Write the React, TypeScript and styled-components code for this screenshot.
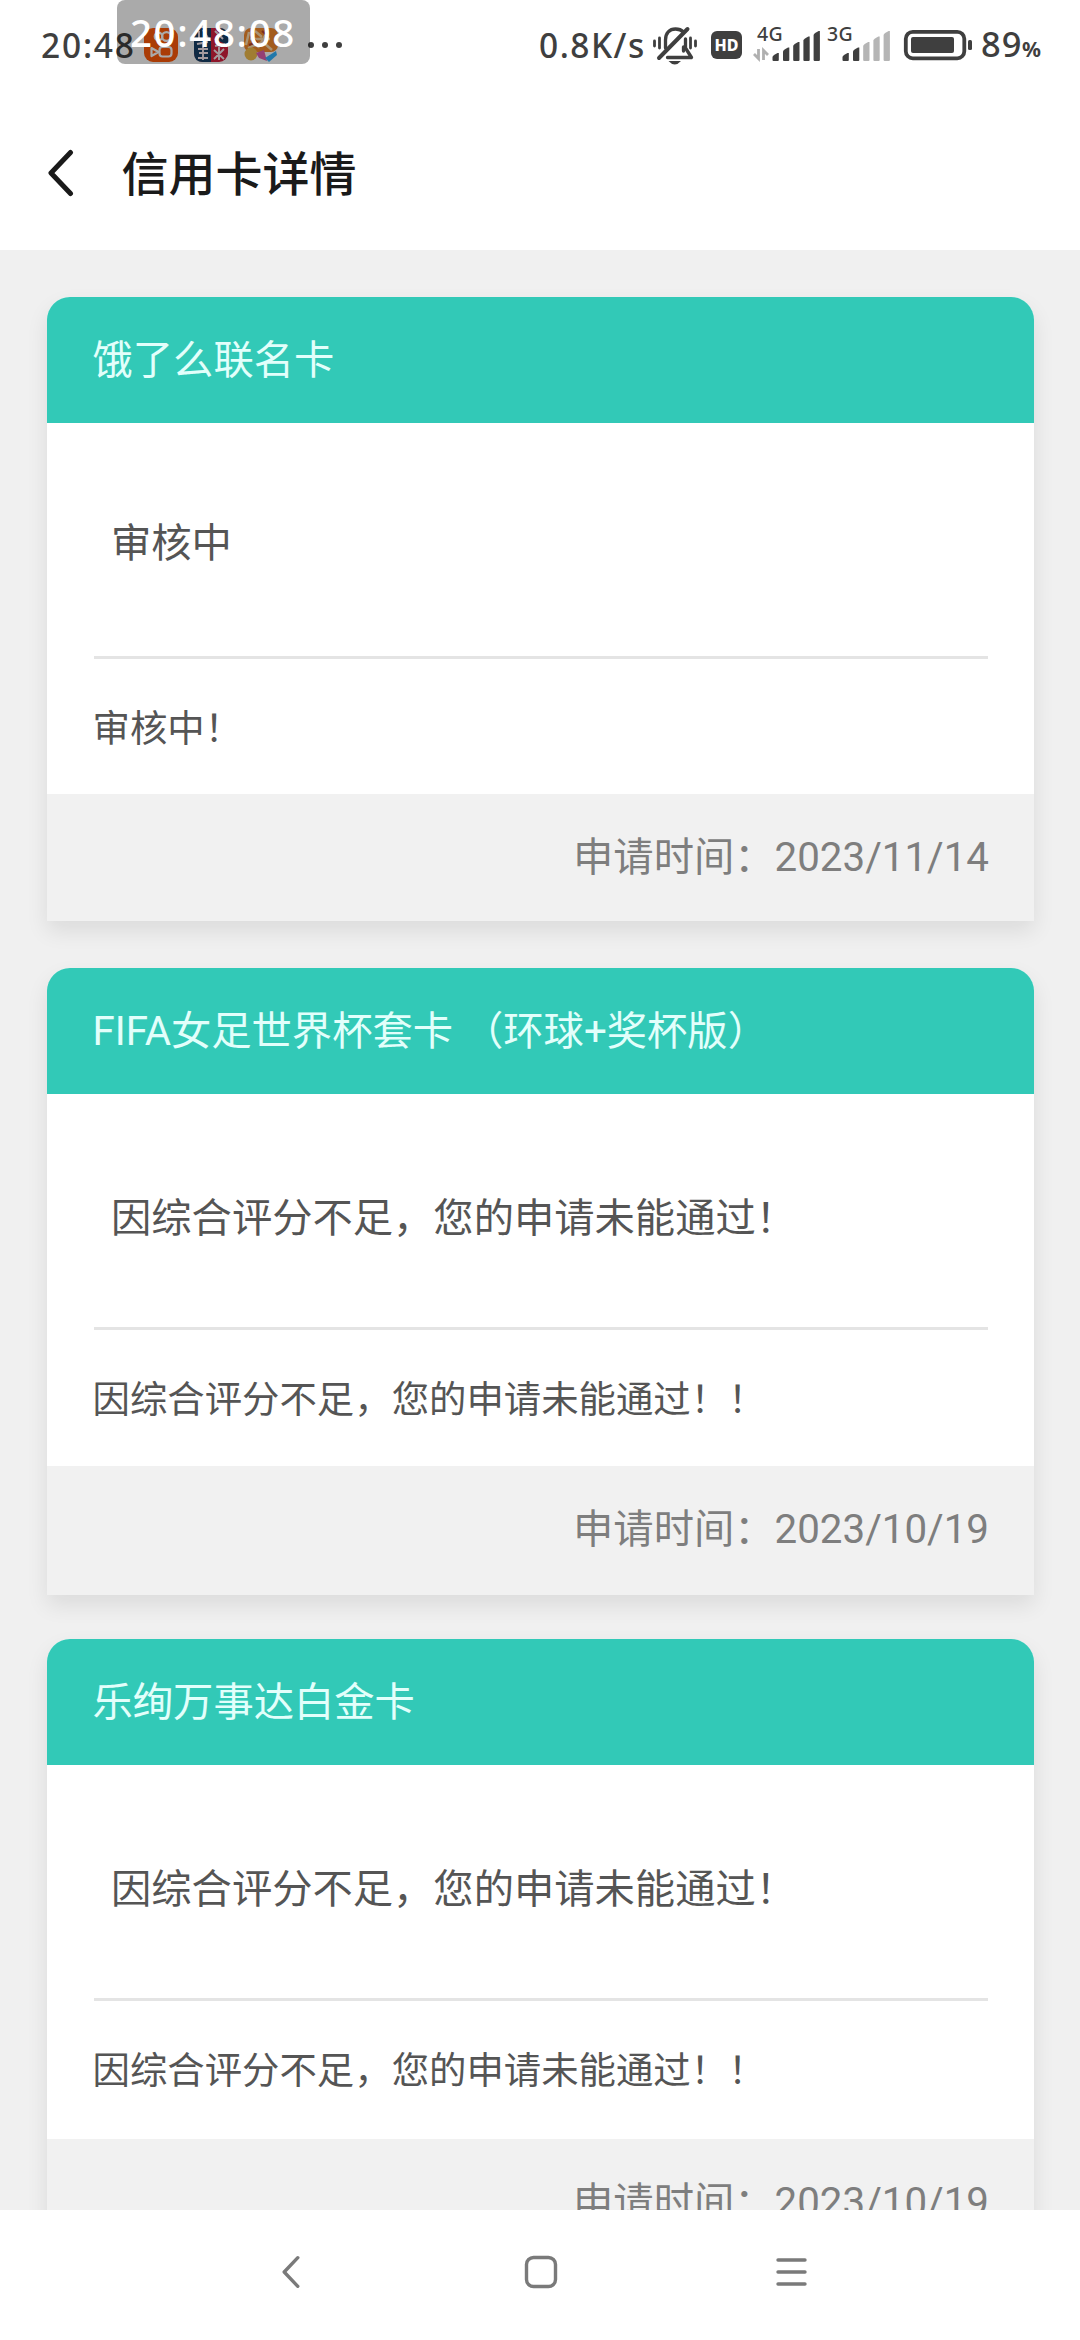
import React from 'react';
import styled, { createGlobalStyle } from 'styled-components';

const Global = createGlobalStyle`
  * { box-sizing: border-box; }
  html, body { margin: 0; padding: 0; background: #fff; }
  body { font-family: Roboto, "Noto Sans CJK SC", sans-serif; }
`;

const Screen = styled.div`
  width: 1080px;
  height: 2340px;
  display: flex;
  flex-direction: column;
  overflow: hidden;
  background: #fff;
`;

const StatusBar = styled.header`
  position: relative;
  height: 92px;
  flex: none;
  display: flex;
  align-items: flex-start;
  justify-content: space-between;
  padding: 0 39px 0 41px;
  color: #3f3f3f;
  font-family: "Noto Sans", sans-serif;
  font-weight: 500;
`;

const StatusGroup = styled.div`
  display: flex;
  align-items: flex-start;
`;

const StatusText = styled.span<{ $size: number; $top: number; $width: number; $track?: number; $left?: number; $bold?: boolean }>`
  flex: none;
  width: ${p => p.$width}px;
  margin: ${p => p.$top}px 0 0 ${p => p.$left ?? 0}px;
  font-size: ${p => p.$size}px;
  font-weight: ${p => (p.$bold ? 700 : 500)};
  line-height: 40px;
  letter-spacing: ${p => p.$track ?? 0}px;
  white-space: nowrap;
`;

const StatusArt = styled.svg<{ $left?: number }>`
  display: block;
  flex: none;
  overflow: visible;
  margin-left: ${p => p.$left ?? 0}px;
`;

const ClockOverlay = styled.div`
  position: absolute;
  left: 117px;
  top: 0;
  width: 193px;
  height: 64px;
  padding-left: 13px;
  border-radius: 0 0 8px 8px;
  border-radius: 8px;
  background: rgba(0, 0, 0, 0.335);
  color: #fff;
  font-size: 38.5px;
  font-weight: 500;
  line-height: 65px;
  letter-spacing: 1.6px;
  white-space: nowrap;
`;

const TitleBar = styled.div`
  height: 158px;
  flex: none;
  display: flex;
  align-items: center;
  padding: 4px 0 0 47px;
  gap: 47.5px;
`;

const Title = styled.h1`
  margin: 0;
  padding-bottom: 4px;
  color: #1a1a1a;
  font-family: "Noto Sans CJK SC", sans-serif;
  font-size: 47px;
  font-weight: 500;
  line-height: 66px;
`;

const List = styled.main`
  flex: 1;
  min-height: 0;
  overflow: hidden;
  display: flex;
  flex-direction: column;
  padding: 47px 46px 0 47px;
  background: #f0f0f0;
`;

const Card = styled.article<{ $height: number }>`
  flex: none;
  height: ${p => p.$height}px;
  margin-bottom: ${p => 671 - p.$height}px;
  display: flex;
  flex-direction: column;
  border-radius: 23px 23px 0 0;
  background: #fff;
  box-shadow: 0 10px 22px rgba(0, 0, 0, 0.09);
`;

const CardHeader = styled.h2`
  margin: 0;
  height: 126px;
  padding: 0 45.5px;
  border-radius: 23px 23px 0 0;
  background: #32c9b7;
  color: #e2fffb;
  font-size: 40.3px;
  font-weight: 400;
  line-height: 128px;
  white-space: pre;
`;

const CardBody = styled.div<{ $height: number }>`
  flex: none;
  height: ${p => p.$height}px;
  display: flex;
  flex-direction: column;
  padding: 0 46px 0 47px;
  color: #555;
`;

const Status = styled.p<{ $top: number }>`
  margin: 0;
  flex: none;
  height: 236px;
  padding: ${p => p.$top}px 0 0 17px;
  border-bottom: 3px solid #e4e4e4;
  font-size: 40.3px;
  line-height: 236px;
`;

const Reason = styled.p`
  margin: 0 0 0 -1.5px;
  font-size: 37.4px;
  line-height: 141px;
`;

const CardFooter = styled.footer`
  flex: 1;
  padding-right: 45px;
  background: #f1f1f1;
  color: #7e7e7e;
  font-size: 40.3px;
  line-height: 127px;
  text-align: right;
`;

const NavBar = styled.nav`
  height: 130px;
  flex: none;
  display: flex;
  align-items: center;
  justify-content: space-between;
  padding: 0 271px 6px 273px;
`;

const NavIcon = styled.svg`
  display: block;
  fill: none;
  stroke: #7a7a7a;
  stroke-width: 3.4;
  stroke-linecap: round;
  stroke-linejoin: round;
`;

const AppIcons = () => (
  <StatusArt width="200" height="70" viewBox="143 0 200 70">
    <rect x="144" y="28" width="34" height="34" rx="9" fill="#ff5a0a" />
    <g fill="none" stroke="#fff" strokeWidth="2.2" strokeLinejoin="round">
      <circle cx="158.500" cy="36.500" r="3.800" />
      <circle cx="166.500" cy="36.500" r="4.400" />
      <rect x="159.500" y="47" width="12" height="9.500" rx="3" />
      <path d="M151.500 48l7 4-7 4z" />
    </g>
    <rect x="194" y="28" width="34" height="34" rx="9" fill="#d5213f" />
    <path d="M194 37q0-9 9-9h8v34h-8q-9 0-9-9zM219 28q9 0 9 9v8l-9-4z" fill="#173f66" />
    <g fill="none" stroke="#f6e8ee" strokeWidth="1.9">
      <path d="M199 31v9M203 30l5 8M197 44l11-2M198 49h10M199 53h9M198 58h10M203 44v16M215 31l8 8M221 31l-6 9M215 46l10-2M214 50l10 9M224 49l-10 10M219 44v16" />
    </g>
    <rect x="244" y="28" width="34" height="24" rx="7" fill="#f58a2c" />
    <g fill="none" stroke="#ffdfae" strokeWidth="2.4">
      <path d="M249 32l-3 13M255 31l7 6M250 39h20M267 32l-9 16M248 48l12-5M264 43l8 7" />
    </g>
    <path d="M252 36l6 8M262 31l7 6M249 45l5-2" stroke="#b9442a" strokeWidth="2" />
    <circle cx="251" cy="54" r="6.500" fill="#f0bc4c" />
    <path d="M256 53l8-3 3 11-8-3z" fill="#df5fae" />
    <path d="M265 58l11-7 1 4-8 7z" fill="#32b4ff" />
    <g fill="#3f3f3f">
      <circle cx="311" cy="45" r="3" />
      <circle cx="325" cy="45" r="3" />
      <circle cx="339" cy="45" r="3" />
    </g>
  </StatusArt>
);

const MuteBell = () => (
  <StatusArt width="48" height="70" viewBox="651 0 48 70">
    <g fill="none" stroke="#3f3f3f" strokeWidth="3.3" strokeLinecap="round" strokeLinejoin="round">
      <path d="M665.500 48V40c0-7 4-11 10-11 3 0 6 1 8 3" />
      <path d="M687.500 29L659 58" strokeWidth="4" />
      <path d="M685.500 39v9l6 9.500h-24" />
      <path d="M683.500 47v4" />
      <path d="M654.500 41v5M659.500 38v10M690.500 38v10M695.500 41v5" strokeWidth="2.800" />
    </g>
    <path d="M668.500 61h12.500q-6.250 7-12.500 0z" fill="#3f3f3f" />
  </StatusArt>
);

const HdBadge = styled.span`
  width: 31px;
  height: 28px;
  margin: 31px 0 0 12px;
  border-radius: 6px;
  background: #3f3f3f;
  color: #fff;
  font-size: 16px;
  font-weight: 800;
  line-height: 28px;
  text-align: center;
`;

const barX = [0, 10.5, 20.7, 30.9, 41.1];
const barTop = [53, 47.5, 42, 36.5, 31];

const SignalBlock = styled.div<{ $left: number; $width: number }>`
  position: relative;
  width: ${p => p.$width}px;
  height: 70px;
  margin-left: ${p => p.$left}px;
`;

const NetworkLabel = styled.span`
  position: absolute;
  left: 0;
  top: 22px;
  font-size: 19.5px;
  line-height: 24px;
  letter-spacing: 0.4px;
`;

interface SignalProps {
  label: string;
  on: number;
  arrows?: boolean;
  offset: number;
}

const Signal = ({ label, on, arrows, offset }: SignalProps) => (
  <>
    <NetworkLabel>{label}</NetworkLabel>
    <StatusArt width={offset + 48} height="70" viewBox={`0 0 ${offset + 48} 70`}>
      {arrows && (
        <path d="M1.500 49v9.500l-4.500-4.500M6.500 60V50.500l4.500 4.500" fill="none" stroke="#b0b0b0" strokeWidth="2.800" />
      )}
      {barX.map((x, i) => (
        <path
          key={x}
          d={`M${offset + x} ${barTop[i] + 4}q0-1.500 5-4h1.300V60q0 1-1 1h-4.300q-1 0-1-1z`}
          fill={i < on ? '#3f3f3f' : '#b5b5b5'}
        />
      ))}
    </StatusArt>
  </>
);

const Battery = () => (
  <StatusArt width="70" height="70" viewBox="903 0 70 70" $left={13}>
    <rect x="905.8" y="31.8" width="58.500" height="26.500" rx="7" fill="none" stroke="#3f3f3f" strokeWidth="3.800" />
    <rect x="911" y="37" width="43" height="16" rx="2" fill="#3f3f3f" />
    <rect x="968" y="40" width="4" height="10" rx="1.500" fill="#3f3f3f" />
  </StatusArt>
);

interface Application {
  name: string;
  status: string;
  reason: string;
  date: string;
  cardHeight: number;
  bodyHeight: number;
  statusTop: number;
}

const applications: Application[] = [
  {
    name: '饿了么联名卡',
    status: '审核中',
    reason: '审核中！',
    date: '2023/11/14',
    cardHeight: 624,
    bodyHeight: 371,
    statusTop: 3,
  },
  {
    name: 'FIFA女足世界杯套卡 （环球+奖杯版）',
    status: '因综合评分不足，您的申请未能通过！',
    reason: '因综合评分不足，您的申请未能通过！！',
    date: '2023/10/19',
    cardHeight: 627,
    bodyHeight: 372,
    statusTop: 7,
  },
  {
    name: '乐绚万事达白金卡',
    status: '因综合评分不足，您的申请未能通过！',
    reason: '因综合评分不足，您的申请未能通过！！',
    date: '2023/10/19',
    cardHeight: 627,
    bodyHeight: 374,
    statusTop: 7,
  },
];

export default function App() {
  return (
    <Screen>
      <Global />
      <StatusBar>
        <StatusGroup>
          <StatusText $size={33.5} $top={25} $width={102} $track={1.8}>20:48</StatusText>
          <AppIcons />
        </StatusGroup>
        <StatusGroup>
          <StatusText $size={33.5} $top={25} $width={112} $track={1.5}>0.8K/s</StatusText>
          <MuteBell />
          <HdBadge>HD</HdBadge>
          <SignalBlock $left={15} $width={64}>
            <Signal label="4G" on={5} arrows offset={15.5} />
          </SignalBlock>
          <SignalBlock $left={6} $width={63}>
            <Signal label="3G" on={2} offset={15.5} />
          </SignalBlock>
          <Battery />
          <StatusText $size={34.5} $top={24} $left={8} $width={41} $track={1}>89</StatusText>
          <StatusText $size={21} $top={29} $width={19} $bold>%</StatusText>
        </StatusGroup>
        <ClockOverlay>20:48:08</ClockOverlay>
      </StatusBar>
      <TitleBar>
        <svg width="27" height="48" viewBox="0 0 27 48" fill="none" stroke="#1a1a1a" strokeWidth="5" strokeLinecap="round" strokeLinejoin="round">
          <path d="M23.500 3.500L4 24l19.500 20.500" />
        </svg>
        <Title>信用卡详情</Title>
      </TitleBar>
      <List>
        {applications.map(a => (
          <Card key={a.name} $height={a.cardHeight}>
            <CardHeader>{a.name}</CardHeader>
            <CardBody $height={a.bodyHeight}>
              <Status $top={a.statusTop}>{a.status}</Status>
              <Reason>{a.reason}</Reason>
            </CardBody>
            <CardFooter>申请时间：{a.date}</CardFooter>
          </Card>
        ))}
      </List>
      <NavBar>
        <NavIcon width="36" height="36" viewBox="0 0 36 36">
          <path d="M24.800 3.700L11.200 18l13.600 14.300" />
        </NavIcon>
        <NavIcon width="36" height="36" viewBox="0 0 36 36">
          <rect x="3.500" y="3.500" width="29" height="29" rx="7" />
        </NavIcon>
        <NavIcon width="36" height="36" viewBox="0 0 36 36">
          <path d="M5 6h27M5 18h27M5 30h27" />
        </NavIcon>
      </NavBar>
    </Screen>
  );
}
